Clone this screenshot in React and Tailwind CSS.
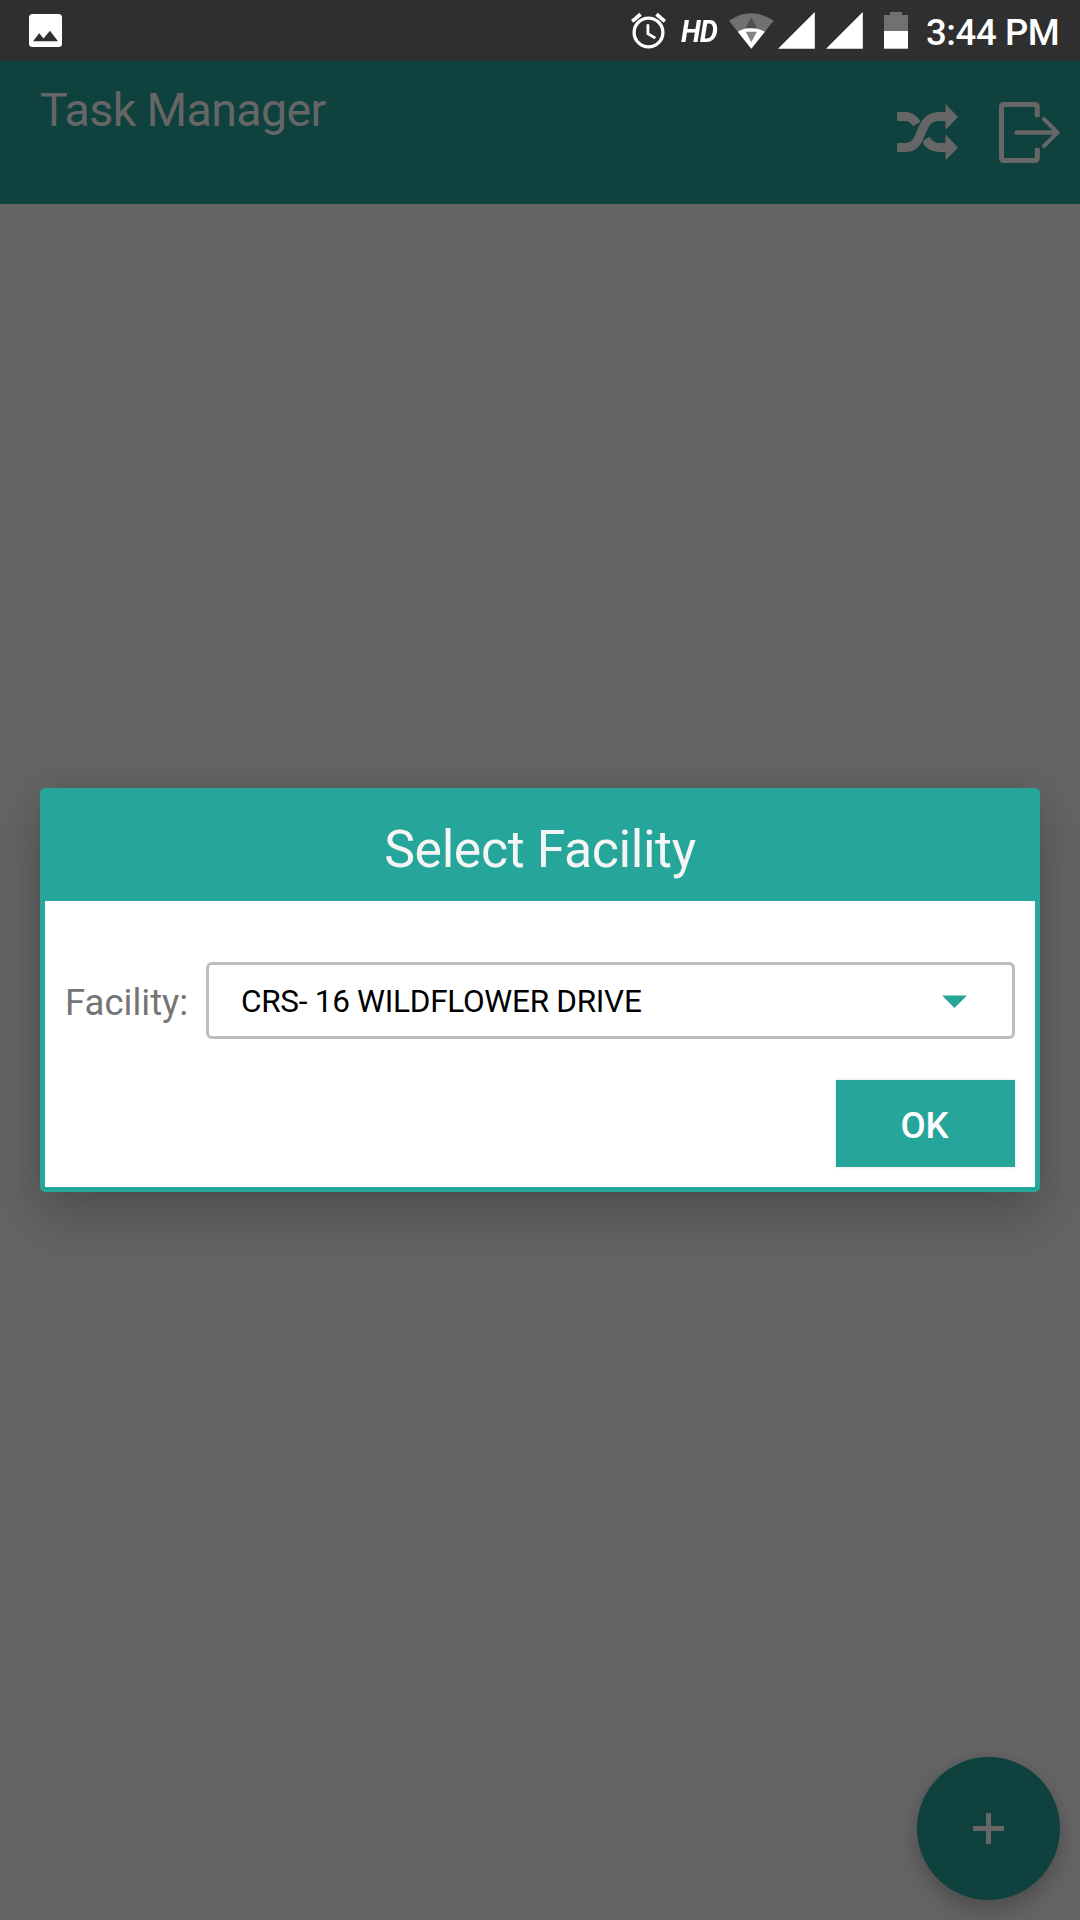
function StatusBar() {
  return (
    <div className="flex h-[61px] items-center bg-[#2f2f2f] text-white">
      <svg className="ml-[29px] h-[33px] w-[33px] shrink-0" viewBox="0 0 33 33">
        <rect width="33" height="33" rx="3.5" fill="#fff" />
        <path d="M4 27.3 L10.2 19.2 L14.5 24.5 L21 16.7 L29 27.3 Z" fill="#2f2f2f" />
      </svg>
      <div className="grow" />
      {/* alarm */}
      <svg className="h-[37px] w-[35px] shrink-0" viewBox="0 0 36 38" fill="none" stroke="#fff">
        <circle cx="18" cy="21" r="14.8" strokeWidth="3.4" />
        <path d="M1.2 9.6 L9.8 2.3 M34.8 9.6 L26.2 2.3" strokeWidth="3.8" />
        <path d="M17.4 12.5 V22.2 L25 26.8" strokeWidth="2.9" />
      </svg>
      <span className="ml-[15px] w-[38px] origin-left scale-x-[0.93] whitespace-nowrap pt-px text-[31px] font-bold italic leading-none tracking-[-1px]">
        HD
      </span>
      {/* wifi */}
      <svg className="ml-[10px] h-[36px] w-[45px] shrink-0" viewBox="0 0 45 36">
        <path d="M0 7.7 Q22.3 -7.2 44.6 7.7 L22.3 35.8 Z" fill="#717171" />
        <path d="M8.8 18.8 Q22.3 10.8 35.8 18.8 L22.3 35.8 Z" fill="#fff" />
        <path d="M22.3 4.5 L28.2 15.2 H16.4 Z" fill="#4e4e4e" />
        <path d="M16.7 18.7 H27.9 L22.3 29.3 Z" fill="#858585" />
      </svg>
      <svg className="ml-[4px] h-[37px] w-[37px] shrink-0" viewBox="0 0 37 37">
        <path d="M0 36.7 L36.8 0 V36.7 Z" fill="#fff" />
      </svg>
      <svg className="ml-[11px] h-[37px] w-[37px] shrink-0" viewBox="0 0 37 37">
        <path d="M0 36.7 L36.8 0 V36.7 Z" fill="#fff" />
      </svg>
      {/* battery */}
      <svg className="ml-[21px] h-[37px] w-[24px] shrink-0" viewBox="0 0 24 37">
        <path d="M0 3 H6 V0 H18 V3 H24 V19 H0 Z" fill="#717171" />
        <rect y="19" width="24" height="17.7" fill="#fff" />
      </svg>
      <span className="ml-[18px] mr-[20px] w-[134px] whitespace-nowrap pt-[5px] text-[36.5px] font-medium leading-none tracking-[-0.4px]">
        3:44 PM
      </span>
    </div>
  );
}

function Header() {
  return (
    <header className="flex h-[143px] bg-[#0f423e] text-[#666]">
      <h1 className="ml-[40px] mt-[22px] grow text-[46.5px] leading-[54px] tracking-[-0.6px]">Task Manager</h1>
      <svg className="mr-[41px] mt-[43px] h-[57px] w-[61px] blur-[0.5px]" viewBox="0 0 61 57">
        <g fill="none" stroke="#666" strokeWidth="9">
          <path d="M0 12.5 H8 C14 12.5 17 15 20 20" />
          <path d="M28.5 35 C31.5 40.5 35 43.5 42 43.5 H50" />
          <path d="M9 43.5 C28 43.5 20 12.5 42 12.5" stroke="#0f423e" strokeWidth="11.5" />
          <path d="M0 43.5 H9 C28 43.5 20 12.5 42 12.5 H50" />
        </g>
        <path d="M48.5 0 L61 13 L48.5 26 Z M48.5 30.5 L61 43.5 L48.5 56.5 Z" fill="#666" />
      </svg>
      <svg className="mr-[20px] mt-[41px] h-[61px] w-[61px]" viewBox="0 0 61 61" fill="none" stroke="#666" strokeWidth="5">
        <path d="M38.3 15 V5 Q38.3 2.5 35.8 2.5 H5 Q2.5 2.5 2.5 5 V56 Q2.5 58.5 5 58.5 H35.8 Q38.3 58.5 38.3 56 V46" />
        <path d="M17.7 30.5 H57" strokeLinecap="round" strokeWidth="4.6" />
        <path d="M45 17 L58.5 30.5 L45 44" strokeLinecap="round" strokeWidth="4" />
      </svg>
    </header>
  );
}

function FacilityDialog() {
  return (
    <section className="mx-[40px] mt-[584px] h-[404px] rounded-[5px] border-[5px] border-[#26a69a] bg-white shadow-[0_26px_56px_rgba(0,0,0,0.2),0_0_30px_rgba(0,0,0,0.07)]">
      <h2 className="h-[108px] bg-[#26a69a] pt-[27px] text-center text-[51.8px] leading-[60px] tracking-[-0.4px] text-[#f5f5f5]">
        Select Facility
      </h2>
      <div className="mt-[61px] flex items-center pl-[20px] pr-[20px]">
        <label className="w-[141px] whitespace-nowrap pt-[5px] text-[36.5px] leading-[44px] text-[#757575]">
          Facility:
        </label>
        <div className="flex h-[77px] grow items-center justify-between rounded-[6px] border-[3px] border-[#bdbdbd] pl-[32px] pr-[45px]">
          <span className="pt-[2px] text-[31.5px] leading-[38px] tracking-[-0.28px] text-black">
            CRS- 16 WILDFLOWER DRIVE
          </span>
          <svg className="mt-px h-[13px] w-[25px]" viewBox="0 0 25 13">
            <path d="M0 0.4 H25 L12.5 13 Z" fill="#26a69a" />
          </svg>
        </div>
      </div>
      <button className="ml-auto mr-[20px] mt-[41px] block h-[87px] w-[179px] bg-[#26a69a] pr-[2px] pt-[5px] text-[36.5px] font-medium leading-none text-white shadow-[0_0_3px_rgba(0,0,0,0.15)]">
        OK
      </button>
    </section>
  );
}

export default function App() {
  return (
    <main className="flex h-[1920px] w-[1080px] flex-col overflow-hidden bg-[#646464] font-['Roboto',sans-serif]">
      <StatusBar />
      <Header />
      <FacilityDialog />
      <button
        aria-label="Add task"
        className="mb-[20px] ml-auto mr-[20px] mt-auto flex h-[143px] w-[143px] items-center justify-center rounded-full bg-[#0f423e] shadow-[0_12px_22px_rgba(0,0,0,0.2),0_0_12px_rgba(0,0,0,0.06)]"
      >
        <svg className="h-[31px] w-[31px]" viewBox="0 0 31 31" fill="none" stroke="#666" strokeWidth="5">
          <path d="M15.5 0 V31 M0 15.5 H31" />
        </svg>
      </button>
    </main>
  );
}
